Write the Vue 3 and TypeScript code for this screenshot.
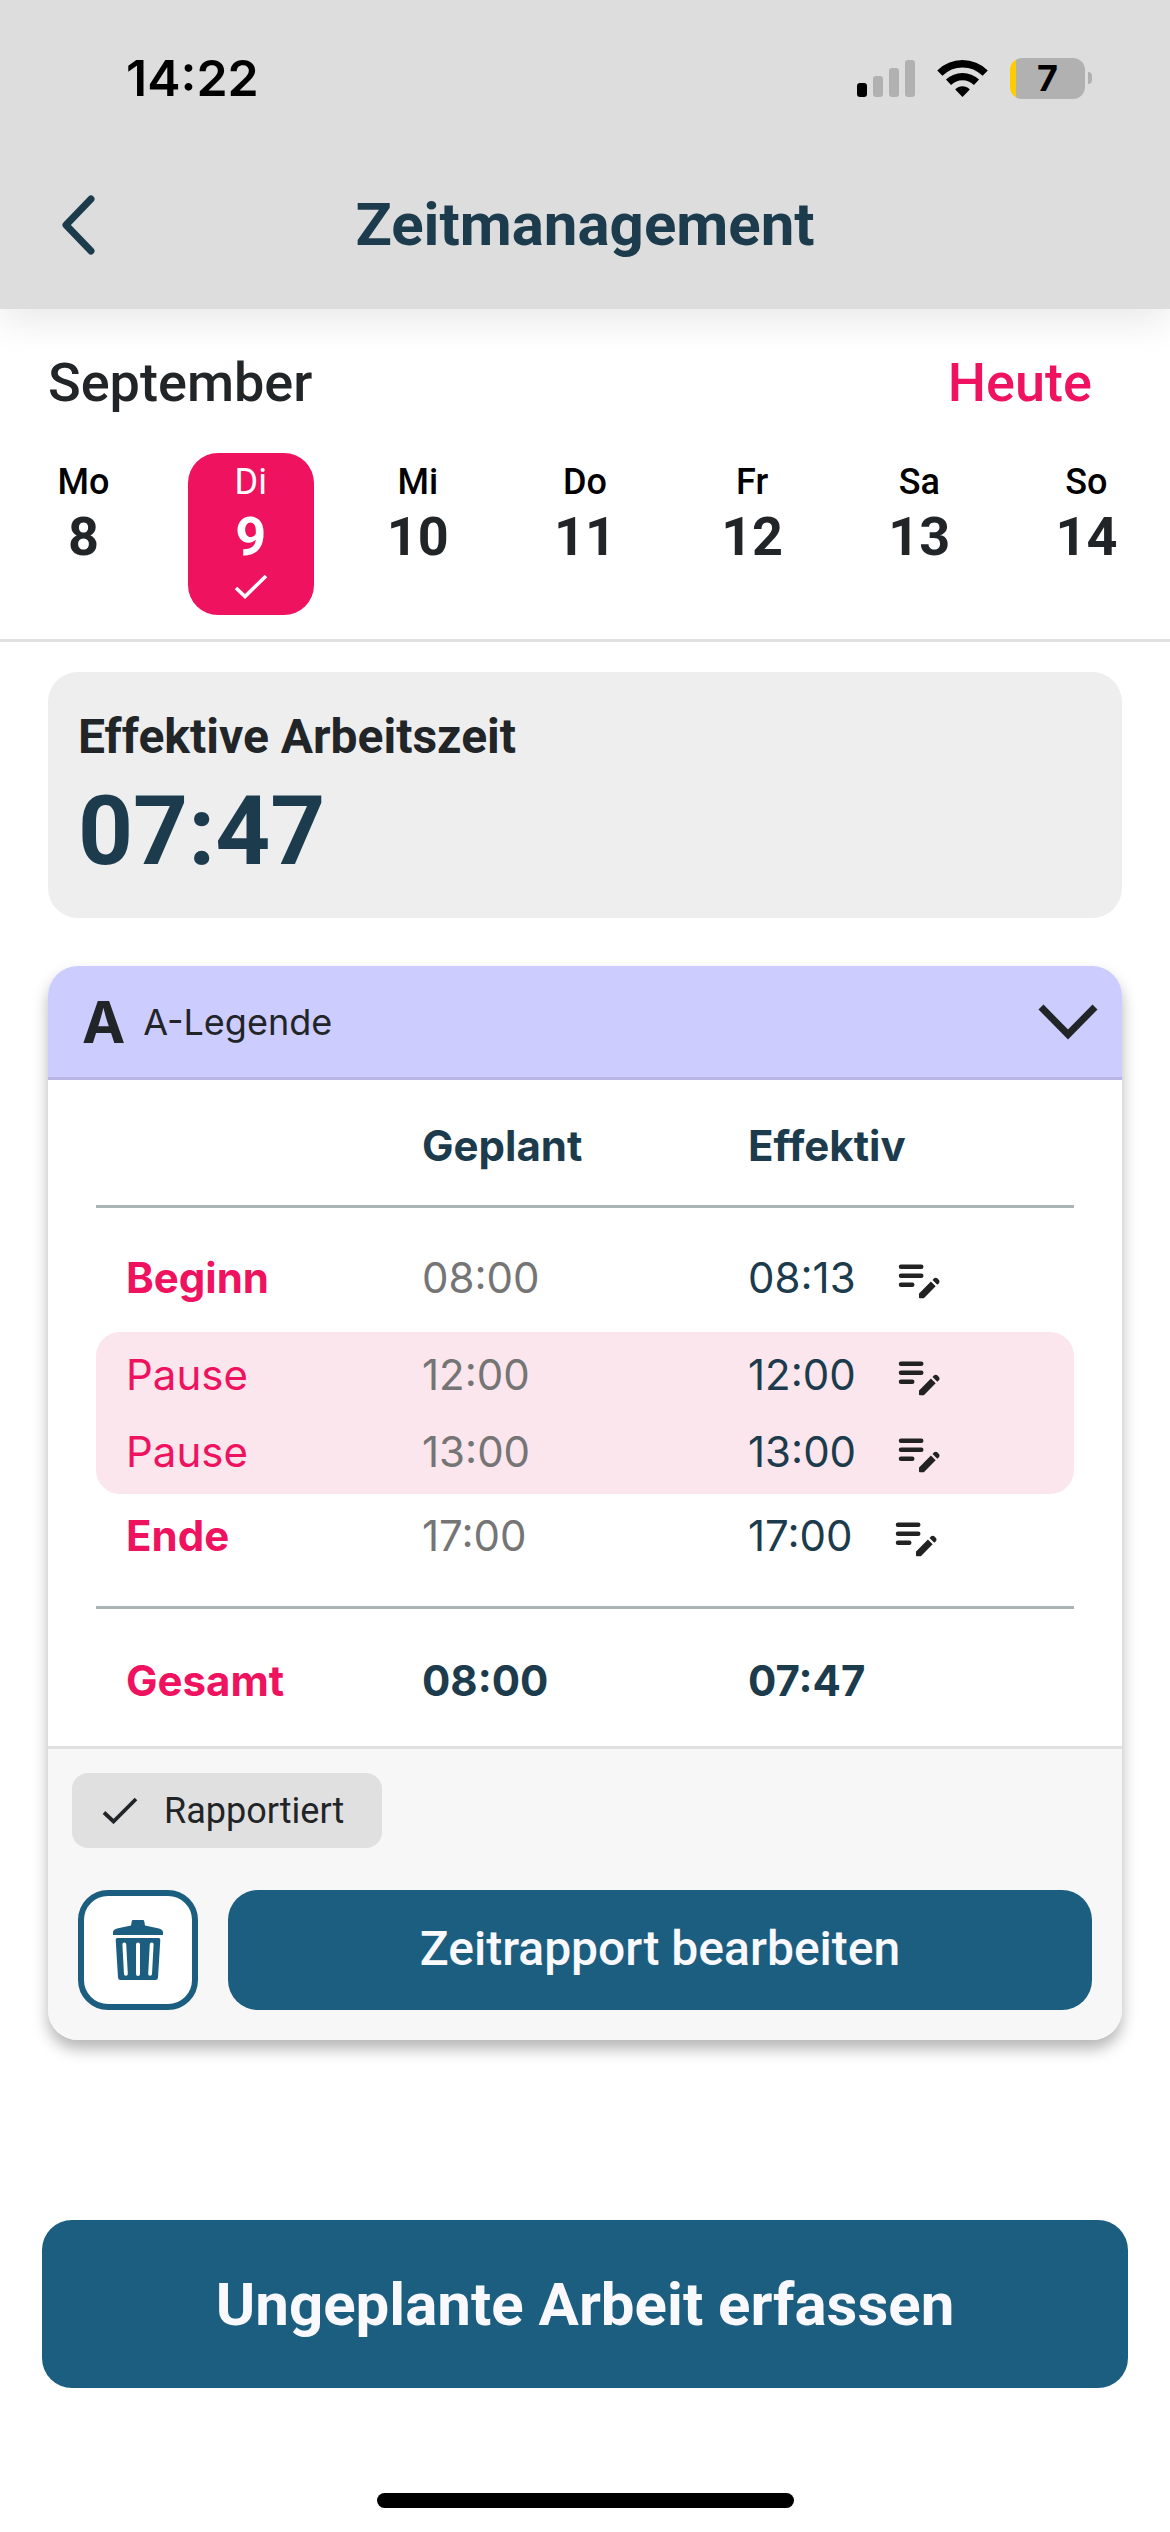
<script setup lang="ts">
import { ref } from 'vue'

interface Day {
  name: string
  date: number
  reported?: boolean
}

interface Entry {
  label: string
  planned: string
  actual: string
  kind: 'start' | 'pause' | 'end'
}

const days: Day[] = [
  { name: 'Mo', date: 8 },
  { name: 'Di', date: 9, reported: true },
  { name: 'Mi', date: 10 },
  { name: 'Do', date: 11 },
  { name: 'Fr', date: 12 },
  { name: 'Sa', date: 13 },
  { name: 'So', date: 14 },
]

const entries: Entry[] = [
  { label: 'Beginn', planned: '08:00', actual: '08:13', kind: 'start' },
  { label: 'Pause', planned: '12:00', actual: '12:00', kind: 'pause' },
  { label: 'Pause', planned: '13:00', actual: '13:00', kind: 'pause' },
  { label: 'Ende', planned: '17:00', actual: '17:00', kind: 'end' },
]

const selected = ref(9)
</script>

<template>
  <div class="screen">
    <header class="top">
      <div class="status">
        <span class="clock">14:22</span>
        <div class="indicators">
          <svg class="signal" viewBox="0 0 58 38" aria-hidden="true">
            <rect x="0" y="24" width="10" height="14" rx="3" fill="#000" />
            <rect x="16" y="17" width="10" height="21" rx="3" fill="#b1b1b1" />
            <rect x="32" y="9" width="10" height="29" rx="3" fill="#b1b1b1" />
            <rect x="48" y="1" width="10" height="37" rx="3" fill="#b1b1b1" />
          </svg>
          <svg class="wifi" viewBox="0 0 51 38" aria-hidden="true">
            <g fill="none" stroke="#000" stroke-width="7.4">
              <path d="M2.8 14.2C15.6 1.6 35.4 1.6 48.200 14.2" />
              <path d="M11.500 23.300C19.500 15.700 31.500 15.700 39.500 23.300" />
            </g>
            <path d="M25.500 38 18.200 30.500c4-4.200 10.600-4.200 14.600 0z" />
          </svg>
          <div class="battery">
            <span class="battery-body">7</span>
            <span class="battery-tip"></span>
          </div>
        </div>
      </div>
      <div class="nav">
        <button class="back" type="button" aria-label="Zurück">
          <svg viewBox="0 0 36 62" aria-hidden="true">
            <path d="M31 5 6 31l25 26" fill="none" stroke="currentColor" stroke-width="7" stroke-linecap="round" stroke-linejoin="round" />
          </svg>
        </button>
        <h1>Zeitmanagement</h1>
      </div>
    </header>

    <section class="week">
      <div class="week-head">
        <h2>September</h2>
        <button class="today" type="button">Heute</button>
      </div>
      <div class="days">
        <button
          v-for="day in days"
          :key="day.date"
          type="button"
          class="day"
          :class="{ selected: day.date === selected }"
          @click="selected = day.date"
        >
          <span class="day-name">{{ day.name }}</span>
          <span class="day-date">{{ day.date }}</span>
          <svg v-if="day.reported" class="day-check" viewBox="0 0 36 27" aria-hidden="true">
            <path d="M3 15 12 23.500 33 3" fill="none" stroke="currentColor" stroke-width="3.600" />
          </svg>
        </button>
      </div>
    </section>

    <main>
      <section class="summary">
        <h3>Effektive Arbeitszeit</h3>
        <p>07:47</p>
      </section>

      <article class="card">
        <button class="card-head" type="button">
          <span class="badge">A</span>
          <span class="legend">A-Legende</span>
          <svg class="chevron" viewBox="0 0 60 36" aria-hidden="true">
            <path d="M3 3 30 30.500 57 3" fill="none" stroke="currentColor" stroke-width="7" />
          </svg>
        </button>

        <table>
          <thead>
            <tr>
              <td></td>
              <th scope="col">Geplant</th>
              <th scope="col">Effektiv</th>
            </tr>
          </thead>
          <tbody>
            <tr v-for="(entry, i) in entries" :key="i" :class="entry.kind">
              <th scope="row">{{ entry.label }}</th>
              <td class="planned">{{ entry.planned }}</td>
              <td>
                <div class="actual">
                  {{ entry.actual }}
                  <button type="button" class="edit" aria-label="Zeit bearbeiten">
                    <svg viewBox="0 0 24 24" aria-hidden="true">
                      <path d="M4 7h9M4 11h9M4 15h5" fill="none" stroke="currentColor" stroke-width="2" stroke-linecap="round" />
                      <path d="M17.300 13.580 12.150 18.730a.5.5 0 0 0-.15.360V20.500c0 .28.220.5.500.5h1.410c.130 0 .260-.050.350-.150l5.150-5.150zM20.840 14.280l-.710.710-2.120-2.120.710-.710c.390-.390 1.020-.390 1.410 0l.710.710c.390.390.390 1.020 0 1.410z" fill="currentColor" />
                    </svg>
                  </button>
                </div>
              </td>
            </tr>
          </tbody>
          <tfoot>
            <tr>
              <th scope="row">Gesamt</th>
              <td>08:00</td>
              <td>07:47</td>
            </tr>
          </tfoot>
        </table>

        <footer class="card-foot">
          <span class="chip">
            <svg viewBox="0 0 36 27" aria-hidden="true">
              <path d="M2 15.500 11.500 24.500 34 2" fill="none" stroke="currentColor" stroke-width="3.800" />
            </svg>
            Rapportiert
          </span>
          <div class="actions">
            <button class="delete" type="button" aria-label="Zeitrapport löschen">
              <svg viewBox="0 0 50 60" aria-hidden="true">
                <path d="M20 0h10q1 0 1.200 1l.8 4.500 14 3q4 1 4 4V15H0v-2.500q0-3 4-4l14-3L18.800 1Q19 0 20 0z" />
                <path fill-rule="evenodd" d="M4.500 18h41q2 0 1.800 2l-2.300 37.500q-.2 2.500-2.500 2.500h-35q-2.300 0-2.500-2.500L2.700 20q-.2-2 1.800-2zM9.400 24.500l1.600 29.500a1.900 1.900 0 0 0 3.800-.2L13.200 24.300a1.900 1.900 0 0 0-3.800.2zM23 24.400V54a2 2 0 0 0 4 0V24.400a2 2 0 0 0-4 0zM36.800 24.300l-1.600 29.500a1.900 1.900 0 0 0 3.800.2l1.600-29.500a1.900 1.900 0 0 0-3.800-.2z" />
              </svg>
            </button>
            <button class="primary" type="button">Zeitrapport bearbeiten</button>
          </div>
        </footer>
      </article>
    </main>

    <div class="bottom">
      <button class="record" type="button">Ungeplante Arbeit erfassen</button>
      <div class="home-bar"></div>
    </div>
  </div>
</template>

<style>
body {
  margin: 0;
  background: #fff;
}
</style>

<style scoped>
.screen {
  display: flex;
  flex-direction: column;
  min-height: 100vh;
  font-family: Roboto, sans-serif;
  color: #222528;
}

* {
  box-sizing: border-box;
}

button {
  padding: 0;
  border: 0;
  background: none;
  font: inherit;
  color: inherit;
  cursor: pointer;
}

h1,
h2,
h3,
p {
  margin: 0;
}

svg {
  display: block;
}

.top {
  height: 309px;
  background: #ddd;
  box-shadow: 0 12px 36px rgba(0, 0, 0, 0.09);
}

.status {
  display: flex;
  justify-content: space-between;
  align-items: center;
  height: 156px;
  padding: 0 78px 0 126px;
  font-family: Inter, sans-serif;
  font-optical-sizing: none;
  font-weight: 600;
  color: #000;
}

.clock {
  font-size: 50px;
}

.indicators {
  display: flex;
  align-items: center;
  gap: 22px;
}

.signal {
  width: 58px;
  height: 38px;
}

.wifi {
  width: 51px;
  height: 38px;
}

.battery {
  display: flex;
  align-items: center;
  gap: 3px;
}

.battery-body {
  width: 75px;
  height: 41px;
  border-radius: 12px;
  background: linear-gradient(to right, #fc0 6px, #b1b1b1 6px);
  font-size: 36px;
  font-weight: 700;
  line-height: 41px;
  text-align: center;
}

.battery-tip {
  width: 4px;
  height: 12px;
  border-radius: 0 4px 4px 0;
  background: #b1b1b1;
}

.nav {
  display: grid;
  grid-template-columns: 96px 1fr 96px;
  align-items: center;
  height: 138px;
  padding: 0 24px;
  color: #1c3b4c;
}

.back svg {
  width: 36px;
  height: 62px;
  margin: 0 auto 0 36px;
}

h1 {
  font-size: 60px;
  font-weight: 700;
  line-height: 72px;
  text-align: center;
}

.week {
  border-bottom: 3px solid #e0e0e0;
}

.week-head {
  display: flex;
  justify-content: space-between;
  padding: 42px 78px 0 48px;
}

h2,
.today {
  font-size: 54px;
  font-weight: 500;
  line-height: 64px;
}

.today {
  color: #ee125f;
}

.days {
  display: grid;
  grid-template-columns: repeat(7, 1fr);
  justify-items: center;
  padding: 38px 0 24px;
}

.day {
  display: flex;
  flex-direction: column;
  align-items: center;
  width: 126px;
  height: 162px;
  padding-top: 8px;
  border-radius: 30px;
}

.day-name {
  font-size: 36px;
  font-weight: 500;
  line-height: 42px;
  color: #000;
}

.day-date {
  font-size: 54px;
  font-weight: 700;
  line-height: 68px;
}

.day-check {
  width: 36px;
  height: 27px;
  margin-top: 2px;
}

.day.selected,
.day.selected .day-name {
  background: #ee125f;
  color: #fff;
}

.day.selected .day-name {
  font-weight: 400;
}

main {
  display: flex;
  flex-direction: column;
  gap: 48px;
  padding: 30px 48px;
}

.summary {
  height: 246px;
  padding: 37px 30px;
  border-radius: 30px;
  background: #eee;
}

h3 {
  font-size: 48px;
  font-weight: 700;
  line-height: 56px;
}

.summary p {
  font-size: 96px;
  font-weight: 700;
  line-height: 112px;
  padding-top: 10px;
  color: #1c3b4c;
}

.card {
  overflow: hidden;
  border-radius: 30px;
  background: #fff;
  box-shadow: 0 9px 15px rgba(0, 0, 0, 0.29);
}

.card-head {
  display: flex;
  align-items: center;
  gap: 18px;
  width: 100%;
  height: 114px;
  padding: 0 24px 0 34px;
  border-bottom: 3px solid #b9b6e6;
  background: #ccccfe;
  font-family: Inter, sans-serif;
  font-optical-sizing: none;
}

.badge {
  font-size: 58px;
  font-weight: 700;
}

.legend {
  font-size: 36px;
}

.chevron {
  width: 60px;
  height: 36px;
  margin-left: auto;
}

table {
  width: calc(100% - 96px);
  margin: 0 48px;
  border-spacing: 0;
  table-layout: fixed;
  font-family: Inter, sans-serif;
  font-optical-sizing: none;
  font-size: 42px;
  line-height: 54px;
  color: #1c3b4c;
}

th,
td {
  height: 81px;
  padding: 0;
  text-align: left;
  vertical-align: middle;
}

th {
  font-weight: 700;
}

thead td,
thead th {
  height: 128px;
  padding-top: 6px;
  border-bottom: 3px solid #a9b4b4;
}

th[scope='row'] {
  padding-left: 30px;
  color: #ee125f;
}

.start > * {
  height: 124px;
  padding-top: 16px;
}

.pause > * {
  background: #fbe6ed;
}

.pause th {
  font-weight: 400;
}

.start + .pause > * {
  padding-top: 4px;
}

.pause + .pause > * {
  padding-bottom: 4px;
}

.start + .pause > :first-child {
  border-top-left-radius: 24px;
}

.start + .pause > :last-child {
  border-top-right-radius: 24px;
}

.pause + .pause > :first-child {
  border-bottom-left-radius: 24px;
}

.pause + .pause > :last-child {
  border-bottom-right-radius: 24px;
}

.end > * {
  height: 115px;
  padding-bottom: 28px;
  border-bottom: 3px solid #a9b4b4;
}

.planned {
  color: #757575;
}

.actual {
  display: flex;
  align-items: center;
  gap: 36px;
}

.edit {
  color: #222;
}

.edit svg {
  width: 54px;
  height: 54px;
}

tfoot th,
tfoot td {
  height: 137px;
  padding-top: 6px;
  font-weight: 700;
}

.card-foot {
  display: flex;
  flex-direction: column;
  align-items: flex-start;
  gap: 42px;
  padding: 24px 30px 30px;
  border-top: 3px solid #e0e0e0;
  background: #f7f7f7;
}

.chip {
  display: flex;
  align-items: center;
  gap: 26px;
  min-width: 310px;
  height: 75px;
  margin-left: -6px;
  padding: 0 24px 0 30px;
  border-radius: 16px;
  background: #e0e0e0;
  font-size: 36px;
}

.chip svg {
  width: 36px;
  height: 27px;
}

.actions {
  display: flex;
  gap: 30px;
  width: 100%;
}

.delete {
  display: flex;
  justify-content: center;
  align-items: center;
  width: 120px;
  height: 120px;
  border: 6px solid #1b5e80;
  border-radius: 30px;
  background: #fff;
}

.delete svg {
  width: 50px;
  height: 60px;
  fill: #1b5e80;
}

.primary {
  flex: 1;
  height: 120px;
  padding-bottom: 4px;
  border-radius: 30px;
  background: #1b5e80;
  font-size: 48px;
  font-weight: 500;
  color: #f8f8fd;
}

.bottom {
  display: flex;
  flex-direction: column;
  align-items: center;
  gap: 105px;
  margin-top: auto;
  padding: 0 42px 24px;
}

.record {
  width: 100%;
  height: 168px;
  border-radius: 30px;
  background: #1b5e80;
  font-size: 60px;
  font-weight: 700;
  color: #f8f8fd;
}

.home-bar {
  width: 417px;
  height: 15px;
  border-radius: 8px;
  background: #000;
}
</style>
